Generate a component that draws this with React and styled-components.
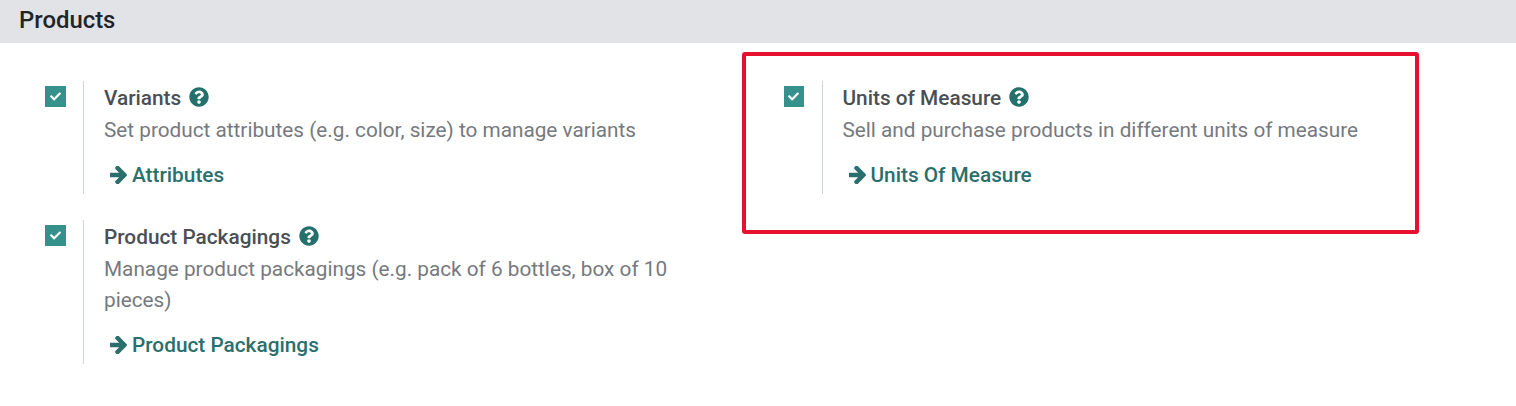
import React from 'react'
import styled, { createGlobalStyle } from 'styled-components'
import { FaCheck, FaQuestionCircle } from 'react-icons/fa'

const GlobalStyle = createGlobalStyle`
html, body {
  margin: 0;
  padding: 0;
  background: #fff;
  font-family: Roboto, "Liberation Sans", sans-serif;
}
`

const Page = styled.div`
width: 1516px;
height: 406px;
overflow: hidden;
background: #fff;
`

const Header = styled.h2`
margin: 0;
height: 43px;
padding: 0 0 4px 19px;
box-sizing: border-box;
display: flex;
align-items: center;
background: #e1e3e7;
color: #212529;
font-size: 23.9px;
font-weight: 500;
`

const Grid = styled.div`
display: grid;
grid-template-columns: 738.5px 738.5px;
grid-auto-rows: min-content;
row-gap: 26px;
padding-top: 38px;
`

const Setting = styled.div`
position: relative;
display: flex;
align-items: flex-start;
padding-left: 45px;
`

const Checkbox = styled.span`
flex: none;
width: 20.5px;
height: 21px;
margin-top: 5px;
margin-right: 17.5px;
display: flex;
align-items: center;
justify-content: center;
background: #35918b;
color: #fff;
font-size: 11px;
`

const Body = styled.div`
width: 600px;
box-sizing: border-box;
padding: 0 0 1px 20px;
border-left: 1px solid #ced4da;
`

const Title = styled.div`
display: flex;
align-items: center;
gap: 8px;
height: 34px;
color: #4a4f55;
font-size: 20.8px;
font-weight: 500;
`

const HelpIcon = styled(FaQuestionCircle)`
color: #24706d;
font-size: 20px;
margin-top: -2px;
`

const Description = styled.div`
color: #76797e;
font-size: 20.75px;
line-height: 31px;
`

const LinkRow = styled.a`
display: flex;
align-items: center;
gap: 5px;
height: 36px;
margin-top: 11px;
padding-left: 6px;
color: #2a6f6d;
font-size: 20.8px;
font-weight: 500;
`

const ArrowSvg = styled.svg`
width: 17px;
height: 18px;
flex: none;
fill: currentColor;
`

function Arrow() {
  return (
    <ArrowSvg viewBox="64 218 1408 1484">
      <path d="M1472 960q0 54-37 91l-651 651q-39 37-91 37-51 0-90-37l-75-75q-38-38-38-91t38-91l293-293h-704q-52 0-84.500-37.500t-32.500-90.500v-128q0-53 32.500-90.500t84.500-37.500h704l-293-294q-38-36-38-90t38-90l75-75q38-38 90-38 53 0 91 38l651 651q37 35 37 90z" />
    </ArrowSvg>
  )
}

const Highlight = styled.div`
position: absolute;
left: 3.5px;
top: -29px;
width: 677px;
height: 182px;
box-sizing: border-box;
border: 4px solid #e7112f;
border-radius: 3px;
pointer-events: none;
`

function SettingBox({ title, description, link, marked }) {
  return (
    <Setting>
      <Checkbox><FaCheck /></Checkbox>
      <Body>
        <Title>{title} <HelpIcon /></Title>
        <Description>{description}</Description>
        <LinkRow><Arrow />{link}</LinkRow>
      </Body>
      {marked && <Highlight />}
    </Setting>
  )
}

export default function App() {
  return (
    <Page>
      <GlobalStyle />
      <Header>Products</Header>
      <Grid>
        <SettingBox
          title="Variants"
          description="Set product attributes (e.g. color, size) to manage variants"
          link="Attributes"
        />
        <SettingBox
          title="Units of Measure"
          description="Sell and purchase products in different units of measure"
          link="Units Of Measure"
          marked
        />
        <SettingBox
          title="Product Packagings"
          description="Manage product packagings (e.g. pack of 6 bottles, box of 10 pieces)"
          link="Product Packagings"
        />
      </Grid>
    </Page>
  )
}
